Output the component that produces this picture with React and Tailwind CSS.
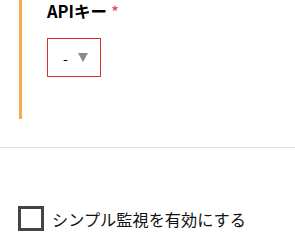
export default function App() {
  return (
    <div className="w-[295px] h-[242px] bg-white overflow-hidden" style={{ fontFamily: '"Noto Sans CJK JP", "Noto Sans", sans-serif' }}>
      <div className="ml-[19px] border-l-[3px] border-[#f5ad4f] h-[119px] pl-[25px]">
        <div className="flex items-start h-[38px]">
          <span className="text-[16.5px] font-bold text-black leading-[23px]">APIキー</span>
          <span className="text-[#e0435b] text-[17px] leading-[24px] ml-[4px]">*</span>
        </div>
        <div className="w-[54px] h-[39px] border border-[#d93025] flex items-center pl-[15px]">
          <span className="text-[14px] text-black leading-none">-</span>
          <svg className="ml-[10px]" width="10" height="9" viewBox="0 0 10 9"><polygon points="0,0 10,0 5,9" fill="#8a8a8a" /></svg>
        </div>
      </div>
      <div className="mt-[28px] h-px bg-[#e2e2e2]" />
      <div className="mt-[58px] ml-[18px] flex items-center gap-[8px]">
        <div className="w-[26px] h-[25px] border-[3px] border-[#444]" />
        <span className="text-[16.2px] text-[#111] leading-[24px]">シンプル監視を有効にする</span>
      </div>
    </div>
  );
}
